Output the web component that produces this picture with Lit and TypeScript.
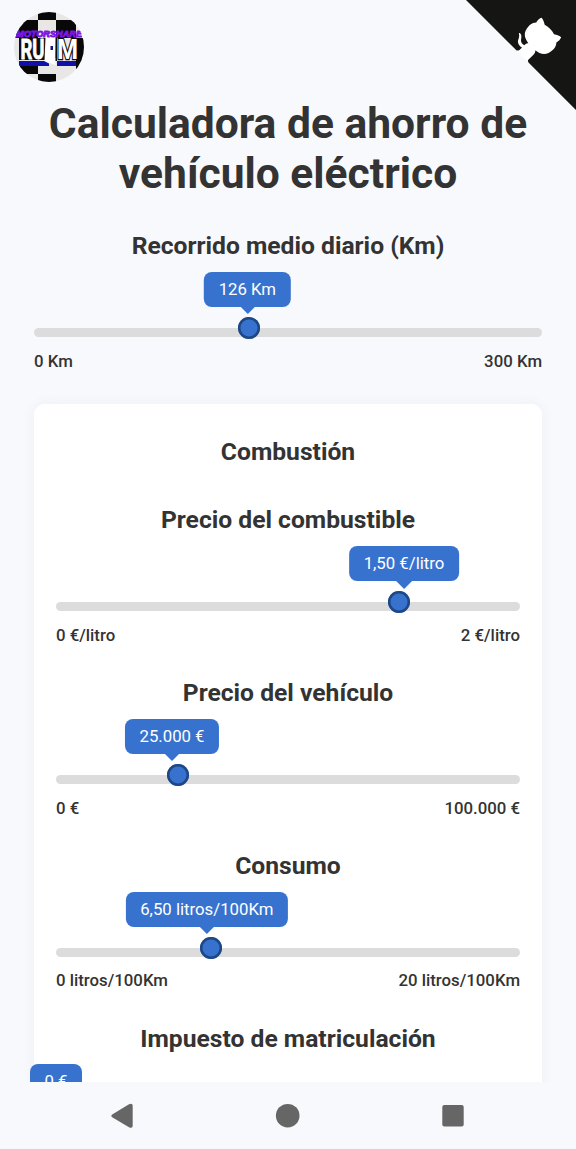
import { LitElement, html, css, svg } from "lit";
import { customElement, property } from "lit/decorators.js";

@customElement("range-field")
class RangeField extends LitElement {
  @property() heading = "";
  @property() value = "";
  @property() min = "";
  @property() max = "";
  @property({ type: Number }) fraction = 0;

  static styles = css`
    :host { display: block; }
    .heading {
      margin: 0; height: 30px; line-height: 31px; text-align: center;
      font-size: 24.65px; font-weight: 700; color: #333; white-space: nowrap;
    }
    .slider { position: relative; padding-top: 68px; }
    .track { height: 9px; border-radius: 5px; background: #dcdcdc; }
    .thumb {
      position: absolute; top: 57px; width: 22px; height: 22px;
      box-shadow: inset 0 0 0 2.5px #1f4784; border-radius: 50%; background: #3773ce;
    }
    .bubble {
      position: absolute; top: 11.8px; height: 35px; padding: 0 14.5px; line-height: 35px;
      border-radius: 8px; background: #3773ce; color: #fff; font-size: 16.75px;
      white-space: nowrap; transform: translateX(-50%);
    }
    .bubble::after {
      content: ""; position: absolute; left: 50%; top: 34.5px; margin-left: -8px;
      border: 8px solid transparent; border-top-color: #3773ce; border-bottom: 0;
    }
    .limits {
      display: flex; justify-content: space-between; margin-top: 13.6px;
      line-height: 20px; font-size: 16.8px; font-weight: 500; color: #333;
    }
  `;

  render() {
    const pct = this.fraction * 100;
    return html`
      <h2 class="heading">${this.heading}</h2>
      <div class="slider">
        <div class="track"></div>
        <div class="thumb" style="left: calc(${pct}% - ${this.fraction * 22}px)"></div>
        <div class="bubble" style="left: ${pct}%">${this.value}</div>
      </div>
      <div class="limits"><span>${this.min}</span><span>${this.max}</span></div>
    `;
  }
}

@customElement("app-root")
class AppRoot extends LitElement {
  static styles = css`
    :host {
      display: flex; flex-direction: column; position: relative; width: 576px; height: 1149px;
      overflow: hidden; background: #f8f9fd; color: #333; font-family: Roboto, sans-serif;
    }
    .page { flex: 1; min-height: 0; overflow: hidden; padding: 99px 34px 0; }
    .title {
      margin: 0 -20px; text-align: center; font-size: 42.55px; line-height: 49.5px;
      font-weight: 700;
    }
    .daily { margin-top: 32px; }
    .card {
      margin-top: 33.4px; padding: 33px 22px; background: #fff; border-radius: 11px;
      box-shadow: 0 0 14px rgba(40, 50, 80, 0.05);
    }
    .card-title {
      margin: 0; height: 30px; line-height: 30px; text-align: center;
      font-size: 24.65px; font-weight: 700;
    }
    .fields { display: grid; gap: 32.1px; padding-top: 37.5px; }
    .nav {
      flex: none; height: 67px; display: flex; align-items: center; justify-content: center;
      background: #f8f9fd;
    }
    .nav svg { display: block; }
    .logo { position: absolute; left: 14px; top: 12px; }
    .corner { position: absolute; right: 0; top: 0; }
    .small { font: italic 700 8.6px "Liberation Sans", sans-serif; }
    .big { font: 700 28px Roboto, sans-serif; }
  `;

  private fields = [
    ["Precio del combustible", "1,50 €/litro", 0.75, "0 €/litro", "2 €/litro"],
    ["Precio del vehículo", "25.000 €", 0.25, "0 €", "100.000 €"],
    ["Consumo", "6,50 litros/100Km", 0.325, "0 litros/100Km", "20 litros/100Km"],
    ["Impuesto de matriculación", "0 €", 0, "0 €", "10.000 €"],
  ] as const;

  private logo = svg`
    <defs><clipPath id="disc"><circle cx="35" cy="35" r="35" /></clipPath></defs>
    <g clip-path="url(#disc)">
      <rect width="70" height="70" fill="#e9e6e6" />
      <path fill="#080808" d="M24 0h18v8H24zM0 8h24v18H0zM42 8h20v18H42zM24 26h18v20H24zM62 26h8v19h-8zM6 54h18v8H6zM62 45h8v12h-8zM24 62h18v8H24z" />
      <path fill="#0d0d0d" d="M5 26h26v22H5z" />
      <text class="big" x="6.5" y="47" textLength="24" lengthAdjust="spacingAndGlyphs" fill="#fff" stroke="#fff" stroke-width=".9">RU</text>
      <path fill="#fff" d="M31.5 25h10.5l-.5 28-11-4z" />
      <path fill="#151580" d="M36.5 34h2.5v4h-2.5z" />
      <path fill="#0d0d0d" d="M41.5 25h1.5v24h-1.5z" />
      <text class="big" x="43" y="47" textLength="21" lengthAdjust="spacingAndGlyphs" fill="#fff" stroke="#0d0d0d" stroke-width="2.4" paint-order="stroke">M</text>
      <path fill="#1010a8" d="M5 49h25l5 2.5v2.5H5zM43 49h19v5H43z" />
      <text class="small" x="2" y="25.3" textLength="66" lengthAdjust="spacingAndGlyphs" fill="#7b16e0" stroke="#7b16e0" stroke-width=".9">MOTORSHARE</text>
    </g>
  `;

  render() {
    return html`
      <main class="page">
        <h1 class="title">Calculadora de ahorro de<br />vehículo eléctrico</h1>
        <range-field class="daily" heading="Recorrido medio diario (Km)" value="126 Km"
          min="0 Km" max="300 Km" .fraction=${0.42}></range-field>
        <section class="card">
          <h2 class="card-title">Combustión</h2>
          <div class="fields">
            ${this.fields.map(([heading, value, fraction, min, max]) => html`
              <range-field .heading=${heading} .value=${value} .fraction=${fraction}
                .min=${min} .max=${max}></range-field>`)}
          </div>
        </section>
      </main>
      <svg class="logo" width="70" height="70" viewBox="0 0 70 70">${this.logo}</svg>
      <svg class="corner" width="110" height="110" viewBox="0 0 250 250">
        <path fill="#151513" d="M0,0 L115,115 L130,115 L142,142 L250,250 L250,0 Z" />
        <path fill="#fff" d="M128.3,109.0 C113.8,99.7 119.0,89.6 119.0,89.6 C122.0,82.7 120.5,78.6 120.5,78.6 C119.2,72.0 123.4,76.3 123.4,76.3 C127.3,80.9 125.5,87.3 125.5,87.3 C122.9,97.6 130.6,101.9 134.4,103.2" />
        <path fill="#fff" d="M115.0,115.0 C114.9,115.1 118.7,116.5 119.8,115.4 L133.7,101.6 C136.9,99.2 139.9,98.4 142.2,98.6 C133.8,88.0 127.5,74.4 143.8,58.0 C148.5,53.4 154.0,51.2 159.7,51.0 C160.3,49.4 163.2,43.6 171.4,40.1 C171.4,40.1 176.1,42.5 178.8,56.2 C183.1,58.6 187.2,61.8 190.9,65.4 C194.5,69.0 197.7,73.2 200.1,77.6 C213.8,80.2 216.3,84.9 216.3,84.9 C212.7,93.1 206.9,96.0 205.4,96.6 C205.1,102.4 203.0,107.8 198.3,112.5 C181.9,128.9 168.3,122.5 157.7,114.1 C157.9,116.9 156.7,120.9 152.7,124.9 L141.0,136.5 C139.8,137.7 141.6,141.9 141.8,141.8 Z" />
      </svg>
      <nav class="nav">
        <svg width="576" height="67" viewBox="0 0 576 67" fill="#666">
          <path d="M112.6 32.2 L129 22.2 Q132.7 20.5 132.7 24 V43.5 Q132.7 47 129 45.2 L112.6 35.4 Q110 33.8 112.6 32.2Z" />
          <circle cx="287.7" cy="33.7" r="11.8" />
          <rect x="442.3" y="23" width="21.4" height="21.4" rx="2" />
        </svg>
      </nav>
    `;
  }
}
